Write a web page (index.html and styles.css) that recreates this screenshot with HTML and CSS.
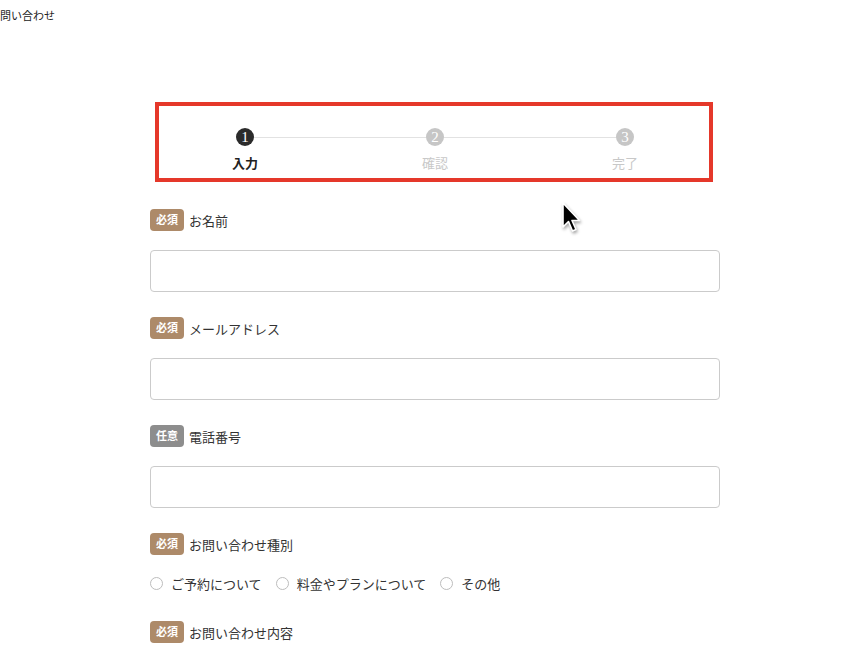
FILE: index.html
```html
<!doctype html>
<html>
    <head>
        <title>問い合わせ</title>
        <meta charset="utf-8">
        <link rel="stylesheet" href="styles.css">
    </head>
    <body>
        <p class="page-title">問い合わせ</p>

        <div class="contact">
            <ol class="steps">
                <li class="step current"><span class="num">1</span><span class="name">入力</span></li>
                <li class="step"><span class="num">2</span><span class="name">確認</span></li>
                <li class="step"><span class="num">3</span><span class="name">完了</span></li>
            </ol>

            <form class="form">
                <div class="field">
                    <div class="label"><span class="badge">必須</span>お名前</div>
                    <input type="text" class="text">
                </div>
                <div class="field">
                    <div class="label"><span class="badge">必須</span>メールアドレス</div>
                    <input type="text" class="text">
                </div>
                <div class="field">
                    <div class="label"><span class="badge optional">任意</span>電話番号</div>
                    <input type="text" class="text">
                </div>
                <div class="field">
                    <div class="label"><span class="badge">必須</span>お問い合わせ種別</div>
                    <div class="radios">
                        <label class="radio"><span class="dot"></span>ご予約について</label>
                        <label class="radio"><span class="dot"></span>料金やプランについて</label>
                        <label class="radio"><span class="dot"></span>その他</label>
                    </div>
                </div>
                <div class="field">
                    <div class="label"><span class="badge">必須</span>お問い合わせ内容</div>
                </div>
            </form>
        </div>

        <!-- highlight drawn over the step indicator -->
        <div class="highlight"></div>

        <svg class="cursor" width="22" height="34" viewBox="0 0 22 34">
            <path d="M2 2 L2 26 L7.5 20.5 L11.5 30 L15 28.5 L11 19.5 L18.5 19.5 Z" fill="#000" stroke="#fff" stroke-width="1.6" stroke-linejoin="round"/>
        </svg>
    </body>
</html>
```

FILE: styles.css
```css
body {
    margin: 0;
    background: #fff;
    color: #333;
    font-family: "Liberation Serif", "Noto Sans CJK JP", serif;
    position: relative;
    min-height: 652px;
    overflow: hidden;
}

.page-title {
    margin: 0;
    padding-top: 8px;
    font-size: 11px;
    line-height: 16px;
    color: #222;
}

.contact {
    width: 570px;
    margin: 0 0 0 150px;
}

/* steps */

.steps {
    list-style: none;
    margin: 104px 0 0;
    padding: 0;
    display: grid;
    grid-template-columns: repeat(3, 1fr);
}

.step {
    position: relative;
    display: flex;
    flex-direction: column;
    align-items: center;
    gap: 9px;
}

.step + .step::before {
    content: "";
    position: absolute;
    top: 9px;
    left: -50%;
    width: 100%;
    height: 1px;
    background: #e2e2e2;
}

.num {
    position: relative;
    z-index: 1;
    width: 18px;
    height: 18px;
    border-radius: 50%;
    background: #c6c6c6;
    color: #fff;
    font-size: 15px;
    line-height: 18px;
    text-align: center;
}

.name {
    font-size: 13px;
    line-height: 18px;
    color: #c8c8c8;
}

.current .num {
    background: #2b2b2b;
}

.current .name {
    color: #222;
    font-weight: bold;
}

/* form */

.form {
    margin-top: 36px;
}

.field {
    margin-bottom: 25px;
}

.label {
    display: flex;
    align-items: center;
    gap: 5px;
    height: 22px;
    font-size: 13px;
    color: #333;
}

.badge {
    width: 34px;
    height: 22px;
    border-radius: 4px;
    background: #ad8a69;
    color: #fff;
    font-size: 11px;
    font-weight: bold;
    line-height: 22px;
    text-align: center;
}

.badge.optional {
    background: #8d8d8d;
}

.text {
    display: block;
    box-sizing: border-box;
    width: 100%;
    height: 42px;
    margin-top: 19px;
    border: 1px solid #cbcbcb;
    border-radius: 4px;
    background: #fff;
}

.radios {
    display: flex;
    gap: 14px;
    margin-top: 18px;
    padding-bottom: 3px;
}

.radio {
    display: flex;
    align-items: center;
    gap: 8px;
    height: 20px;
    font-size: 13px;
    color: #333;
}

.dot {
    box-sizing: border-box;
    width: 13px;
    height: 13px;
    border: 1px solid #bdbdbd;
    border-radius: 50%;
}

/* overlays */

.highlight {
    position: absolute;
    left: 155px;
    top: 102px;
    width: 558px;
    height: 80px;
    box-sizing: border-box;
    border: 4px solid #e5382a;
}

.cursor {
    position: absolute;
    left: 561px;
    top: 201px;
    filter: drop-shadow(1px 2px 1.5px rgba(0, 0, 0, 0.35));
}
```
